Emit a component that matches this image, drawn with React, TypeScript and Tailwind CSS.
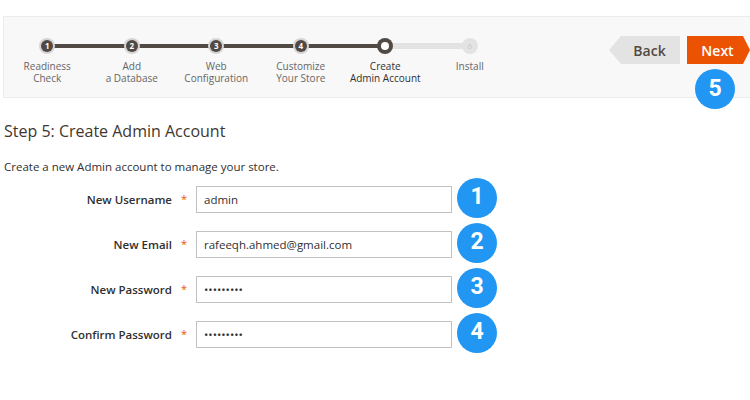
const STEPS = [
  { n: '1', label: 'Readiness\nCheck', state: 'done' },
  { n: '2', label: 'Add\na Database', state: 'done' },
  { n: '3', label: 'Web\nConfiguration', state: 'done' },
  { n: '4', label: 'Customize\nYour Store', state: 'done' },
  { n: '', label: 'Create\nAdmin Account', state: 'active' },
  { n: '6', label: 'Install', state: 'todo' }
]

const FIELDS = [
  { label: 'New Username', value: 'admin', badge: '1' },
  { label: 'New Email', value: 'rafeeqh.ahmed@gmail.com', badge: '2' },
  { label: 'New Password', value: '•••••••••', badge: '3' },
  { label: 'Confirm Password', value: '•••••••••', badge: '4' }
]

function Badge({ n }: { n: string }) {
  return (
    <div className="flex h-[40px] w-[40px] items-center justify-center rounded-full bg-[#2196f3] font-['Roboto',sans-serif] text-[23px] font-bold text-white">
      {n}
    </div>
  )
}

export default function App() {
  return (
    <div className="relative h-[400px] w-[750px] overflow-hidden bg-white pt-[16px] font-['Open_Sans',sans-serif]">
      {/* Progress header */}
      <div className="relative ml-[3px] flex h-[82px] items-start border-y border-l border-[#ececec] bg-[#f8f8f8]">
        <div className="relative ml-[1px] mt-[21px] grid w-[507px] grid-cols-6">
          <div className="absolute left-[42px] top-[6px] h-[4px] w-[338px] bg-[#514943]" />
          <div className="absolute left-[380px] top-[5px] h-[6px] w-[84px] bg-[#e3e3e3]" />
          {STEPS.map((s) => (
            <div key={s.label} className="relative flex flex-col items-center">
              {s.state === 'done' && (
                <div className="flex h-[16px] w-[16px] items-center justify-center rounded-full bg-[#d6d4d2]">
                  <div className="flex h-[12px] w-[12px] items-center justify-center rounded-full bg-[#514943] text-[8px] font-bold leading-none text-white">
                    {s.n}
                  </div>
                </div>
              )}
              {s.state === 'active' && (
                <div className="flex h-[16px] w-[16px] items-center justify-center rounded-full bg-[#514943]">
                  <div className="h-[8px] w-[8px] rounded-full bg-white" />
                </div>
              )}
              {s.state === 'todo' && (
                <div className="flex h-[16px] w-[16px] items-center justify-center rounded-full bg-[#e3e3e3] text-[8px] leading-none text-[#c8c8c8]">
                  {s.n}
                </div>
              )}
              <div
                className={
                  'mt-[6px] whitespace-pre-line text-center text-[10px] leading-[12px] ' +
                  (s.state === 'active' ? 'text-[#303030]' : 'text-[#666666]')
                }
              >
                {s.label}
              </div>
            </div>
          ))}
        </div>

        <div className="ml-auto mt-[19px] flex gap-[7px]">
          <button className="flex h-[28px] w-[71px] items-center justify-center bg-[#e3e3e3] pl-[10px] text-[14px] font-semibold text-[#514943] [clip-path:polygon(12px_0,100%_0,100%_100%,12px_100%,0_50%)]">
            Back
          </button>
          <button className="flex h-[28px] w-[63px] items-center justify-center bg-[#eb5202] pr-[2px] text-[14px] font-semibold text-white [clip-path:polygon(0_0,calc(100%-7px)_0,100%_50%,calc(100%-7px)_100%,0_100%)]">
            Next
          </button>
        </div>
      </div>

      <div className="absolute left-[695px] top-[69px]">
        <Badge n="5" />
      </div>

      {/* Form */}
      <div className="px-[4px] pt-[22px] text-[#303030]">
        <h2 className="text-[16px] leading-[22px] text-[#41362f]">Step 5: Create Admin Account</h2>
        <p className="mt-[17px] text-[11.5px] leading-[16px] text-[#303030]">
          Create a new Admin account to manage your store.
        </p>

        <div className="mt-[11px] flex flex-col gap-[18px]">
          {FIELDS.map((f) => (
            <div key={f.label} className="flex h-[27px] items-center">
              <div className="w-[168px] text-right text-[11.5px] font-semibold text-[#303030]">{f.label}</div>
              <div className="w-[24px] text-center text-[11px] text-[#eb5202]">*</div>
              <div className="flex h-[27px] w-[256px] items-center border border-[#c2c2c2] bg-white px-[7px] text-[11.5px] text-[#303030]">
                {f.value}
              </div>
              <div className="-my-[9px] ml-[5px] -translate-y-[2px]">
                <Badge n={f.badge} />
              </div>
            </div>
          ))}
        </div>
      </div>
    </div>
  )
}
